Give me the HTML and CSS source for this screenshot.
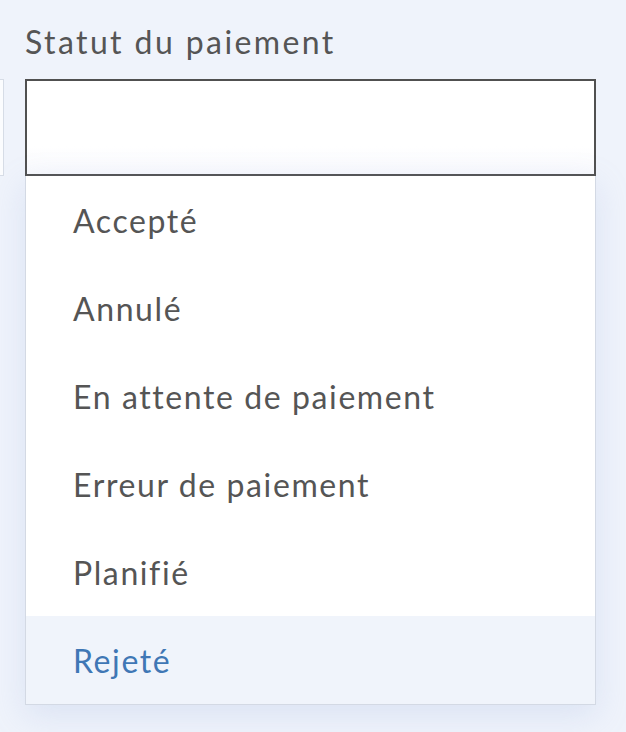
FILE: index.html
```html
<!DOCTYPE html>
<html lang="fr">
<head>
<meta charset="utf-8">
<link rel="stylesheet" href="styles.css">
</head>
<body>
<div class="page">
  <div class="side"></div>
  <div class="field">
    <label class="label">Statut du paiement</label>
    <div class="input"></div>
    <ul class="menu">
      <li class="opt">Accepté</li>
      <li class="opt">Annulé</li>
      <li class="opt">En attente de paiement</li>
      <li class="opt">Erreur de paiement</li>
      <li class="opt">Planifié</li>
      <li class="opt active">Rejeté</li>
    </ul>
  </div>
</div>
</body>
</html>
```
FILE: styles.css
```css
html, body {
  margin: 0;
  padding: 0;
  height: 100%;
}
body {
  background: #eff3fb;
  font-family: "Lato", "Nunito Sans", sans-serif;
  color: #555555;
  overflow: hidden;
}
.page {
  position: relative;
  padding: 21px 30px 0 25px;
}
.side {
  position: absolute;
  left: -20px;
  top: 79px;
  width: 22px;
  height: 95px;
  background: #fbfcfe;
  border: 1px solid #d6dce6;
}
.field {
  width: 571px;
}
.label {
  display: block;
  font-size: 32px;
  line-height: 42px;
  letter-spacing: 2.4px;
  margin-bottom: 16px;
  color: #555555;
}
.input {
  box-sizing: border-box;
  height: 97px;
  border: 2px solid #505050;
  background: linear-gradient(#ffffff 70%, #f8f9fd);
}
.menu {
  list-style: none;
  margin: 0;
  padding: 0;
  background: #ffffff;
  border: 1px solid #d3d9e4;
  border-top: none;
  box-shadow: 0 10px 30px rgba(160, 180, 225, 0.25);
}
.opt {
  height: 88px;
  display: flex;
  align-items: center;
  padding-left: 47px;
  font-size: 32px;
  letter-spacing: 1.6px;
  color: #555555;
}
.opt.active {
  background: #f0f4fb;
  color: #3f77b5;
}
```
